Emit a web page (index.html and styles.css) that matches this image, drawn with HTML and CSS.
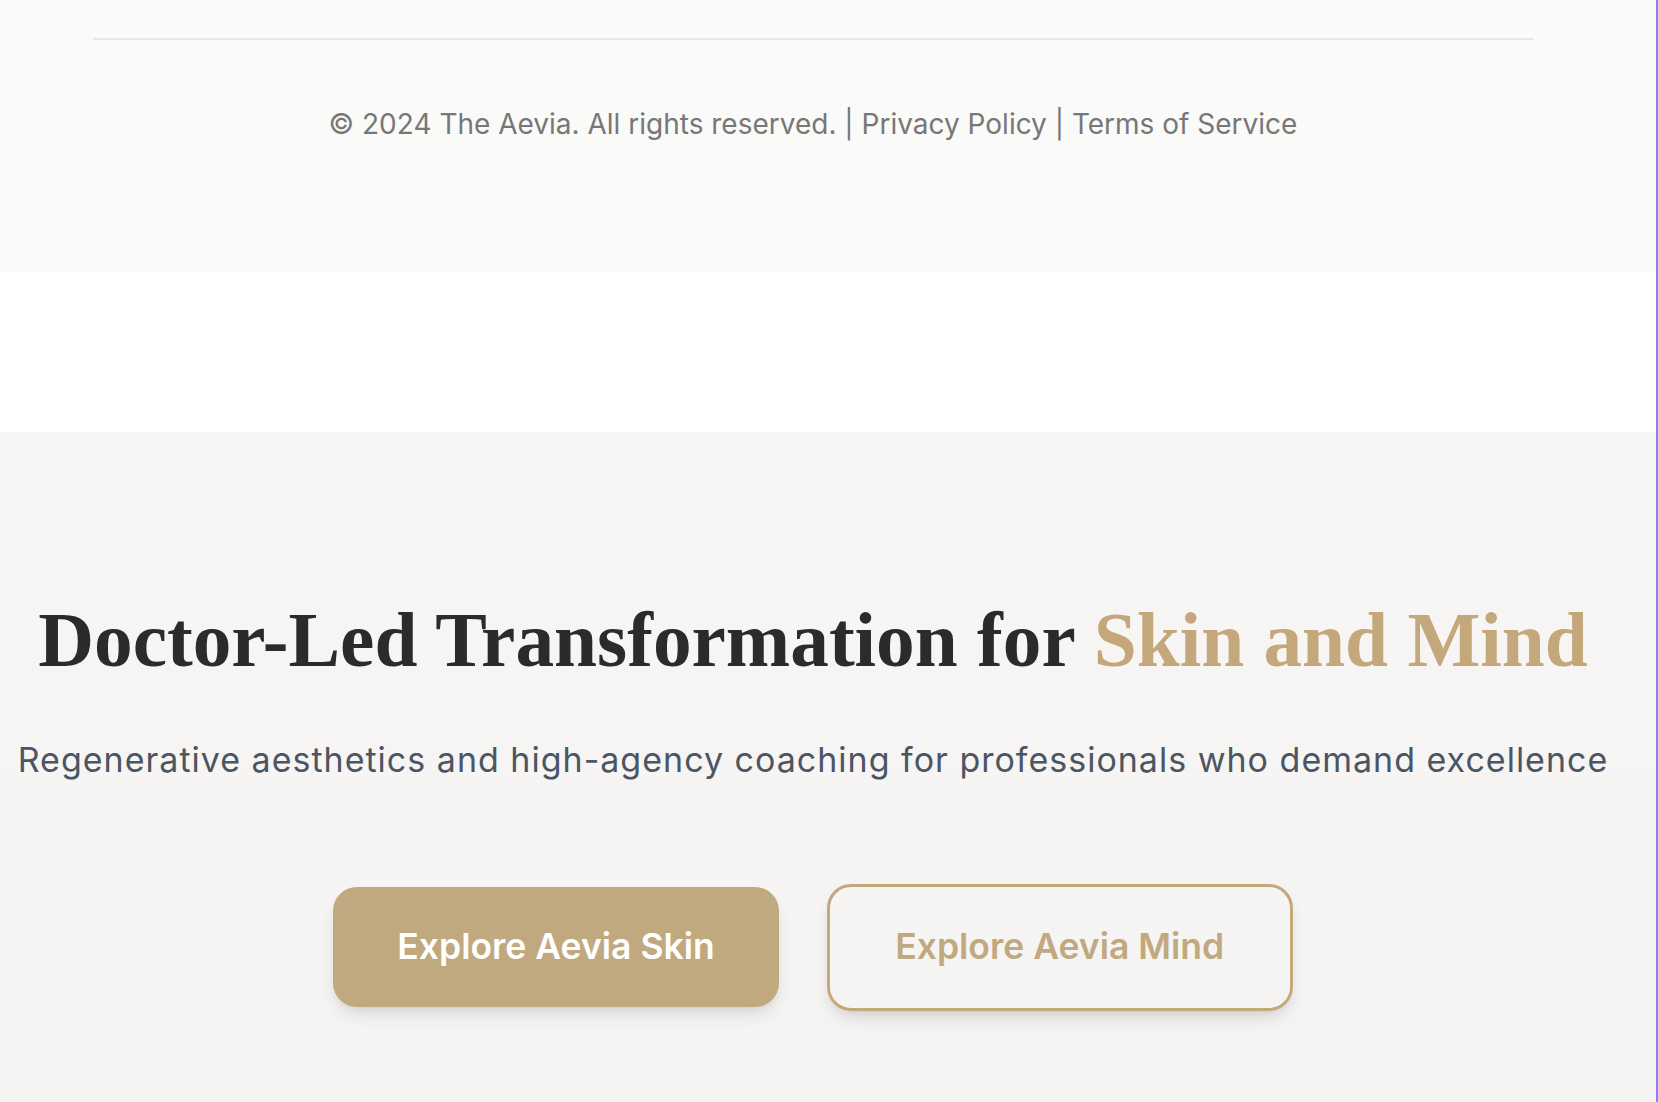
FILE: index.html
```html
<!DOCTYPE html>
<html lang="en">
<head>
<meta charset="utf-8">
<title>The Aevia</title>
<link rel="stylesheet" href="styles.css">
</head>
<body>
<div class="page">
  <footer class="site-footer">
    <div class="footer-inner">
      <p class="footer-text">© 2024 The Aevia. All rights reserved. | Privacy Policy | Terms of Service</p>
    </div>
  </footer>
  <div class="spacer"></div>
  <section class="hero">
    <h1 class="hero-title">Doctor-Led Transformation for <span class="accent">Skin and Mind</span></h1>
    <p class="hero-sub">Regenerative aesthetics and high-agency coaching for professionals who demand excellence</p>
    <div class="hero-actions">
      <a class="btn btn-primary" href="#">Explore Aevia Skin</a>
      <a class="btn btn-outline" href="#">Explore Aevia Mind</a>
    </div>
  </section>
</div>
<div class="edge-line"></div>
</body>
</html>
```
FILE: styles.css
```css
* { box-sizing: border-box; }
html, body { margin: 0; padding: 0; }
body {
  background: #ffffff;
  font-family: "Inter", "Noto Sans", sans-serif;
  overflow: hidden;
  height: 1102px;
}
.page {
  width: 1656px;
}
.site-footer {
  background: #fafaf9;
  height: 272px;
  padding-right: 30px;
}
.footer-inner {
  width: 1440px;
  margin: 0 auto;
  position: relative;
  top: 38px;
  border-top: 2px solid #e5e7eb;
  padding-top: 63px;
}
.footer-text {
  margin: 0;
  text-align: center;
  font-size: 28px;
  line-height: 42px;
  color: #777777;
}
.spacer {
  height: 160px;
  background: #ffffff;
}
.hero {
  background: linear-gradient(180deg, #f7f6f4 0%, #f5f4f2 100%);
  height: 670px;
  padding: 162px 30px 0 0;
  display: flex;
  flex-direction: column;
  align-items: center;
  text-align: center;
}
.hero-title {
  margin: 0;
  font-family: "Liberation Serif", "Times New Roman", serif;
  font-weight: 700;
  font-size: 77.3px;
  line-height: 1.2;
  color: #2b2b2b;
  white-space: nowrap;
}
.accent { color: #c4a87c; }
.hero-sub {
  margin: 47px 0 0;
  font-size: 34px;
  letter-spacing: 1px;
  line-height: 1.5;
  color: #4b5563;
  white-space: nowrap;
}
.hero-actions {
  margin-top: 99px;
  display: flex;
  align-items: center;
  gap: 48px;
}
.btn {
  display: inline-block;
  text-decoration: none;
  font-family: "Inter", sans-serif;
  font-weight: 600;
  font-size: 35.5px;
  line-height: 42px;
  padding: 39px 64px;
  border-radius: 24px;
  box-shadow: 0 10px 20px -6px rgba(0,0,0,0.15), 0 4px 8px -4px rgba(0,0,0,0.08);
}
.btn-primary {
  background: #c1a97f;
  color: #ffffff;
}
.btn-outline {
  background: transparent;
  color: #c1a97f;
  border: 3.5px solid #c4a87c;
  padding: 39.5px 65.5px;
}
.edge-line {
  position: fixed;
  top: 0;
  right: 0;
  width: 2px;
  height: 100%;
  background: #8a80f2;
}
```
